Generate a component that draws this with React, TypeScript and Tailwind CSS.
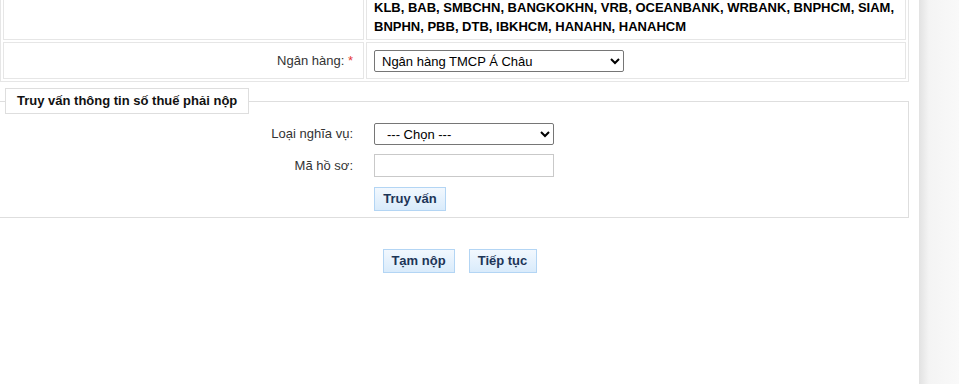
import React from 'react';

// Màn hình nộp thuế - phần chọn ngân hàng và truy vấn số thuế

const labelCls = "w-[353px] text-right text-[13px] text-[#333]";

function Nut({ text, className }: { text: string; className?: string }) {
    return (
        <button
            type="button"
            className={"h-[24px] border border-[#b3d5f4] bg-gradient-to-b from-[#f2f8fe] to-[#d9ebfb] text-[13px] font-bold text-[#1d3557] " + (className ?? '')}
        >
            {text}
        </button>
    );
}

export default function App() {
    return (
        <div className="flex min-h-[384px] font-['Liberation_Sans',Arial,sans-serif] overflow-hidden">
            <div className="w-[919px] shrink-0 bg-white">
                <table className="-mt-[6px] w-[909px] border-separate border-spacing-[2px] border border-[#e6e6e6]">
                    <tbody>
                        <tr>
                            <td className="w-[361px] border border-[#e6e6e6]"></td>
                            <td className="border border-[#e6e6e6] pl-[7px] pr-2 pb-[3px] text-[13px] font-bold leading-[19px] text-black">
                                KLB, BAB, SMBCHN, BANGKOKHN, VRB, OCEANBANK, WRBANK, BNPHCM, SIAM,
                                <br />
                                BNPHN, PBB, DTB, IBKHCM, HANAHN, HANAHCM
                            </td>
                        </tr>
                        <tr>
                            <td className="h-[37px] border border-[#e6e6e6] pr-[10px] text-right text-[13px] text-[#333]">
                                Ngân hàng: <span className="text-[#e53935]">*</span>
                            </td>
                            <td className="border border-[#e6e6e6] pl-[7px]">
                                <select className="h-[22px] w-[250px] rounded-[2px] border border-[#767676] bg-white pl-[3px] text-[13px] text-black">
                                    <option>Ngân hàng TMCP Á Châu</option>
                                </select>
                            </td>
                        </tr>
                    </tbody>
                </table>

                <fieldset className="-ml-px mt-[6px] w-[910px] border border-[#dedede] pl-[5px] pb-[6px]">
                    <legend className="h-[26px] border border-[#dedede] bg-white px-[11px] text-[13px] font-bold leading-[24px] text-[#111]">
                        Truy vấn thông tin số thuế phải nộp
                    </legend>
                    <div className="-ml-[5px] flex flex-col pt-[9px]">
                        <div className="flex items-center gap-[21px]">
                            <span className={labelCls}>Loại nghĩa vụ:</span>
                            <select className="h-[22px] w-[180px] rounded-[2px] border border-[#767676] bg-white pl-[8px] text-[13px] text-black">
                                <option>--- Chọn ---</option>
                            </select>
                        </div>
                        <div className="mt-[9px] flex items-center gap-[21px]">
                            <span className={labelCls}>Mã hồ sơ:</span>
                            <input type="text" className="h-[23px] w-[180px] border border-[#c9c9c9] bg-white px-1 text-[13px]" />
                        </div>
                        <div className="mt-[10px] flex gap-[21px]">
                            <span className="w-[353px]"></span>
                            <Nut text="Truy vấn" className="w-[72px]" />
                        </div>
                    </div>
                </fieldset>

                <div className="mt-[31px] flex justify-center gap-[14px]">
                    <Nut text="Tạm nộp" className="w-[72px]" />
                    <Nut text="Tiếp tục" className="w-[68px]" />
                </div>
            </div>
            <div className="flex-1 bg-gradient-to-r from-[#e2e2e2] via-[#f4f4f4] via-25% to-[#f9f9f9]"></div>
        </div>
    );
}
